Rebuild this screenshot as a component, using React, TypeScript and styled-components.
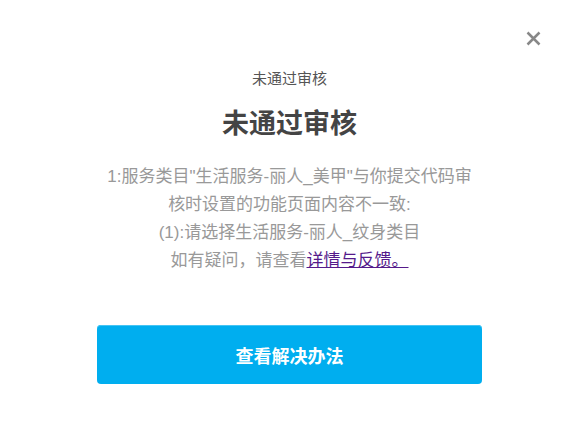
import React from "react";
import styled, { createGlobalStyle } from "styled-components";

const GlobalStyle = createGlobalStyle`
  html, body {
    margin: 0;
    padding: 0;
    background: #fff;
    font-family: "Liberation Sans", Arial, "Noto Sans CJK SC", sans-serif;
  }
`;

const Dialog = styled.div`
  position: relative;
  width: 563px;
  height: 435px;
  background: #fff;
  box-sizing: border-box;
  padding: 69px 0 0 16px;
  display: flex;
  flex-direction: column;
  align-items: center;
`;

const Close = styled.button`
  position: absolute;
  top: 29px;
  right: 20px;
  width: 19px;
  height: 18px;
  padding: 0;
  border: 0;
  background: none;
  cursor: pointer;
  display: flex;
  align-items: center;
  justify-content: center;
`;

const Caption = styled.div`
  font-size: 15px;
  line-height: 20px;
  color: #555;
`;

const Title = styled.h2`
  margin: 17px 0 0;
  font-size: 27px;
  line-height: 36px;
  font-weight: bold;
  color: #444;
`;

const Message = styled.p`
  margin: 21px 0 0;
  width: 380px;
  text-align: center;
  font-size: 17px;
  line-height: 28px;
  color: #999;
`;

const Link = styled.a`
  color: #551a8b;
  text-decoration: underline;
`;

const Action = styled.button`
  margin-top: 50px;
  width: 385px;
  height: 59px;
  border: 0;
  border-radius: 4px;
  background: #00aeef;
  box-shadow: inset 0 1px 0 #45c4f3;
  color: #fff;
  font-family: inherit;
  font-size: 18px;
  font-weight: bold;
  cursor: pointer;
`;

export default function App() {
  return (
    <>
      <GlobalStyle />
      <Dialog>
        <Close aria-label="关闭">
          <svg width="15" height="15" viewBox="0 0 15 15">
            <path d="M1.5 1.5 L13.5 13.5 M13.5 1.5 L1.5 13.5" stroke="#888" strokeWidth="2.5" />
          </svg>
        </Close>
        <Caption>未通过审核</Caption>
        <Title>未通过审核</Title>
        <Message>
          1:服务类目"生活服务-丽人_美甲"与你提交代码审核时设置的功能页面内容不一致:
          <br />
          (1):请选择生活服务-丽人_纹身类目
          <br />
          如有疑问，请查看<Link href="#">详情与反馈。</Link>
        </Message>
        <Action>查看解决办法</Action>
      </Dialog>
    </>
  );
}
